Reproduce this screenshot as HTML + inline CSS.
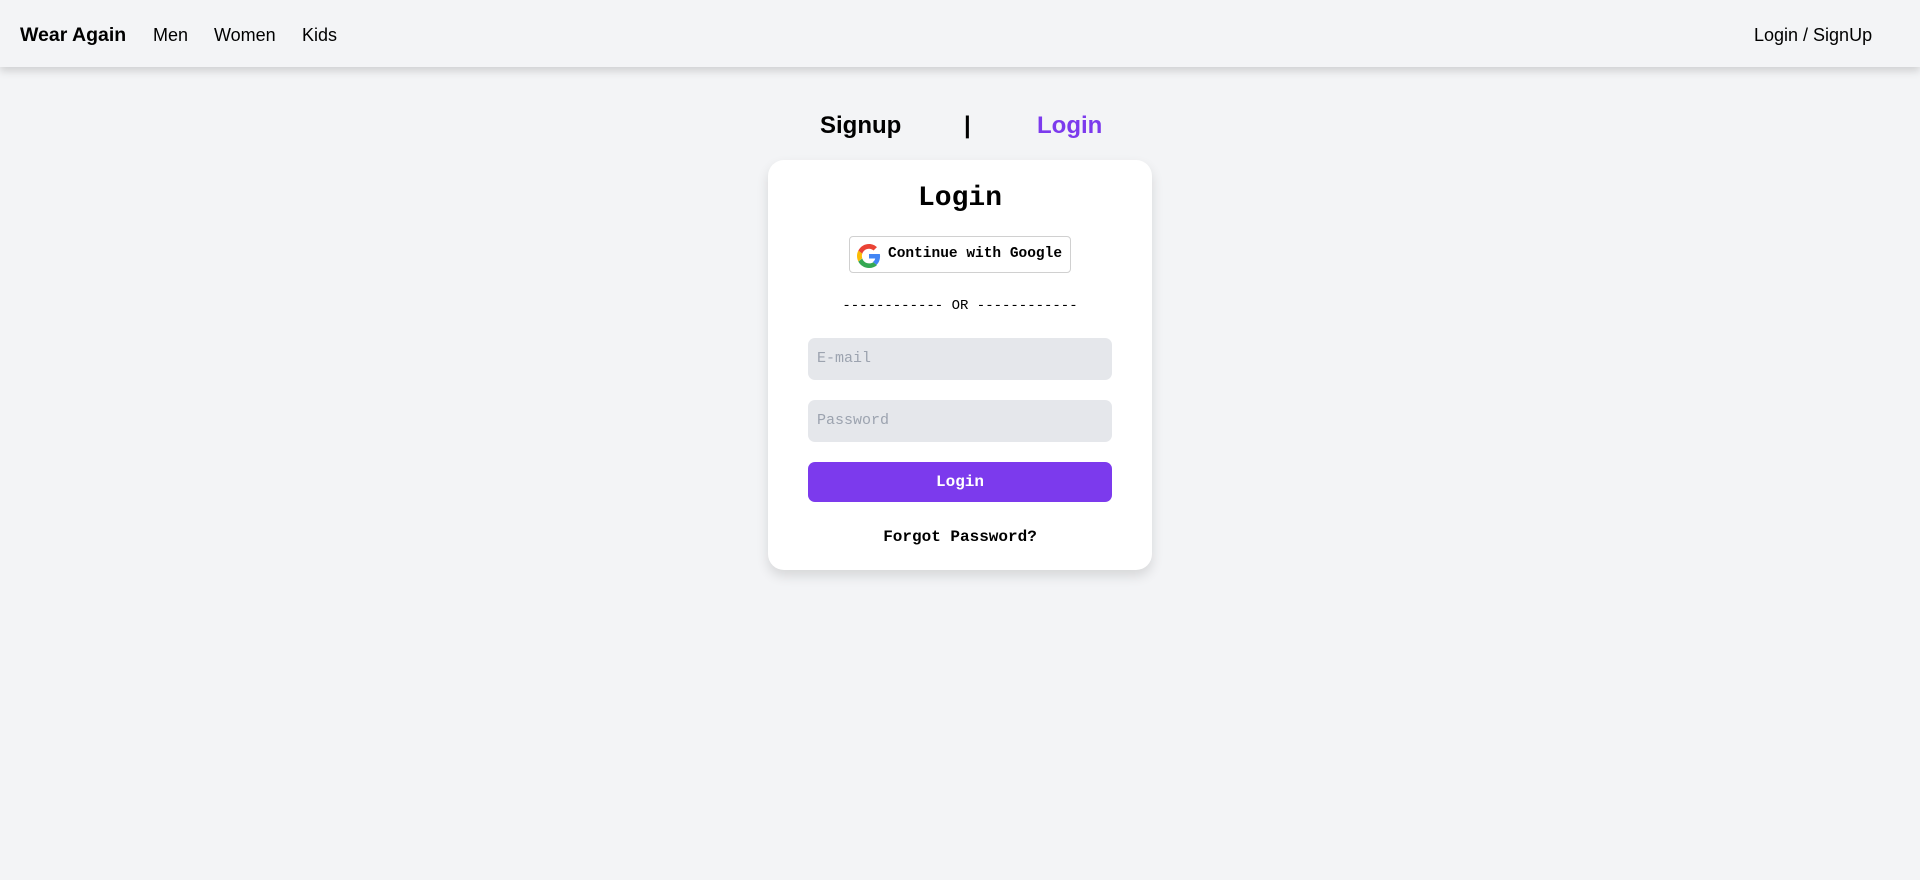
<!DOCTYPE html>
<html><head><meta charset="utf-8"><style>
*{box-sizing:border-box;margin:0;padding:0}
body{width:1920px;height:880px;background:#f3f4f6;font-family:"Liberation Sans",sans-serif;position:relative;overflow:hidden}
nav{position:absolute;left:0;top:0;width:1920px;height:67px;background:#f3f4f6;box-shadow:0 4px 8px rgba(0,0,0,.15)}
nav span{position:absolute;top:24px;font-size:18px;color:#000;line-height:22px}
.brand{font-weight:bold;font-size:19.5px!important;top:24px!important}
.tab{position:absolute;top:111px;font-size:24px;font-weight:bold;line-height:30px}
.card{position:absolute;left:768px;top:160px;width:384px;height:410px;background:#fff;border-radius:16px;box-shadow:0 6px 12px rgba(0,0,0,.12);font-family:"Liberation Mono","DejaVu Sans Mono",monospace}
.abs{position:absolute}
.title{left:0;width:384px;top:21px;text-align:center;font-size:28px;font-weight:bold;line-height:36px}
.g{left:81px;top:76px;width:222px;height:37px;border:1px solid #d0d0d0;border-radius:4px;font-size:14.5px;font-weight:bold;line-height:35px;padding-left:38px;white-space:nowrap}
.or{left:0;width:384px;top:137px;text-align:center;font-size:14px;line-height:18px}
.inp{left:40px;width:304px;height:42px;background:#e5e7eb;border-radius:7px;color:#9ca3af;font-size:15px;line-height:42px;padding-left:9px}
.btn{left:40px;top:302px;width:304px;height:40px;background:#7c3aed;border-radius:7px;color:#fff;text-align:center;font-size:16px;font-weight:bold;line-height:40px}
.fp{left:0;width:384px;top:366px;text-align:center;font-size:16px;font-weight:bold;line-height:22px}
</style></head><body>
<nav>
<span class="brand" style="left:20px">Wear Again</span>
<span style="left:153px">Men</span>
<span style="left:214px">Women</span>
<span style="left:302px">Kids</span>
<span style="left:1754px">Login / SignUp</span>
</nav>
<div class="tab" style="left:820px">Signup</div>
<div class="tab" style="left:964px">|</div>
<div class="tab" style="left:1037px;color:#7c3aed">Login</div>
<div class="card">
<div class="abs title">Login</div>
<div class="abs g"><svg style="position:absolute;left:7px;top:7px" width="24" height="24" viewBox="0 0 48 48"><path fill="#EA4335" d="M24 9.5c3.5 0 6.6 1.2 9.1 3.6l6.8-6.8C35.8 2.4 30.3 0 24 0 14.6 0 6.6 5.4 2.6 13.3l7.9 6.1C12.4 13.6 17.7 9.5 24 9.5z"/><path fill="#4285F4" d="M46.1 24.5c0-1.6-.1-3.1-.4-4.5H24v9h12.4c-.5 2.9-2.200 5.3-4.6 6.9l7.4 5.8c4.3-4 6.9-9.9 6.9-17.2z"/><path fill="#FBBC05" d="M10.5 28.6c-.5-1.4-.8-3-.8-4.6s.3-3.2.8-4.6l-7.9-6.1C.9 16.5 0 20.1 0 24s.9 7.5 2.6 10.7l7.9-6.1z"/><path fill="#34A853" d="M24 48c6.5 0 11.9-2.1 15.9-5.8l-7.4-5.8c-2.1 1.4-4.8 2.3-8.5 2.3-6.3 0-11.6-4.1-13.5-9.800l-7.9 6.1C6.6 42.6 14.6 48 24 48z"/></svg>Continue with Google</div>
<div class="abs or">------------ OR ------------</div>
<div class="abs inp" style="top:178px">E-mail</div>
<div class="abs inp" style="top:240px">Password</div>
<div class="abs btn">Login</div>
<div class="abs fp">Forgot Password?</div>
</div>
</body></html>
